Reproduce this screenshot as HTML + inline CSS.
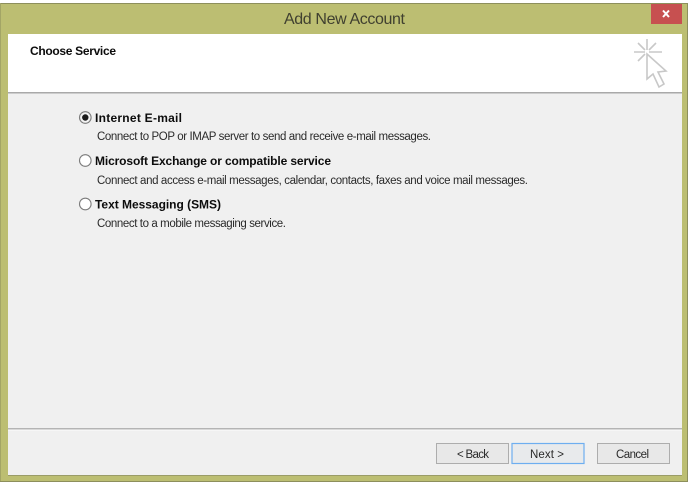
<!DOCTYPE html>
<html><head><meta charset="utf-8"><style>
html,body{margin:0;padding:0;width:690px;height:484px;overflow:hidden;background:#fff}
svg{display:block}
text{font-family:"Liberation Sans",sans-serif;font-size:11.5px;fill:#2a2a2a}
.b{font-weight:bold;font-size:12px;fill:#0c0c0c}
</style></head><body>
<svg width="690" height="484" viewBox="0 0 690 484" xmlns="http://www.w3.org/2000/svg">
<rect x="0" y="3" width="688" height="479" fill="#bcbe72"/>
<rect x="0" y="3" width="688" height="1" fill="#8d8f5c"/>
<rect x="0" y="3" width="1" height="479" fill="#a3a566"/>
<rect x="0" y="481" width="688" height="1" fill="#8d8f5c"/>
<rect x="687" y="3" width="1" height="479" fill="#8d8f5c"/>
<rect x="8" y="34" width="674" height="441.500" fill="#f0f0f0"/>
<rect x="8" y="34" width="674" height="58" fill="#fff"/>
<rect x="8" y="92" width="674" height="1.500" fill="#a9a9a9"/>
<rect x="8" y="428" width="674" height="1.500" fill="#b4b4b4"/>
<rect x="8" y="429.500" width="674" height="1" fill="#fbfbfb"/>
<rect x="8" y="475" width="674" height="1" fill="#9a9c68"/>
<rect x="651" y="4" width="31" height="20" fill="#c75050"/>
<path d="M663 10.500l6 6.500M669 10.500l-6 6.500" stroke="#fff" stroke-width="2"/>
<text x="284" y="24" textLength="121" lengthAdjust="spacing" style="font-size:16px;fill:#404030">Add New Account</text>
<text x="30" y="55" class="b" textLength="86" lengthAdjust="spacing">Choose Service</text>
<g fill="none" stroke="#c8c8c8" stroke-width="1.600">
<path d="M647 39v11M634 52h11M649 52h13M638 43l7 7M656 43l-7 7M638 61l7-7"/>
<path d="M647 54L666 71L658 72L664 84L659 87L653 74L647 79z" fill="#fff"/>
</g>
<g fill="#f4f4f4" stroke="#7c7c7c" stroke-width="1.100">
<circle cx="85.300" cy="117.500" r="5.800"/>
<circle cx="85.300" cy="160.500" r="5.800" fill="#fff"/>
<circle cx="85.300" cy="204" r="5.800" fill="#fff"/>
</g>
<circle cx="85.300" cy="117.500" r="3.200" fill="#1c1c1c"/>
<text x="95" y="122" class="b" textLength="87" lengthAdjust="spacing">Internet E-mail</text>
<text x="97" y="140" textLength="334" lengthAdjust="spacing">Connect to POP or IMAP server to send and receive e-mail messages.</text>
<text x="95" y="165" class="b" textLength="236" lengthAdjust="spacing">Microsoft Exchange or compatible service</text>
<text x="97" y="184" textLength="431" lengthAdjust="spacing">Connect and access e-mail messages, calendar, contacts, faxes and voice mail messages.</text>
<text x="95" y="208.500" class="b" textLength="126" lengthAdjust="spacing">Text Messaging (SMS)</text>
<text x="97" y="227" textLength="189" lengthAdjust="spacing">Connect to a mobile messaging service.</text>
<g fill="#e8e8e8" stroke="#adadad" stroke-width="1">
<rect x="436.500" y="443.500" width="72" height="20"/>
<rect x="597.500" y="443.500" width="72" height="20"/>
</g>
<rect x="512" y="443.500" width="72" height="20" fill="#e8eaec" stroke="#6eaef0" stroke-width="1.200"/>
<text x="457" y="458" textLength="32" lengthAdjust="spacing">&lt; Back</text>
<text x="530" y="458" textLength="34" lengthAdjust="spacing">Next &gt;</text>
<text x="616" y="458" textLength="33" lengthAdjust="spacing">Cancel</text>
</svg>
</body></html>
